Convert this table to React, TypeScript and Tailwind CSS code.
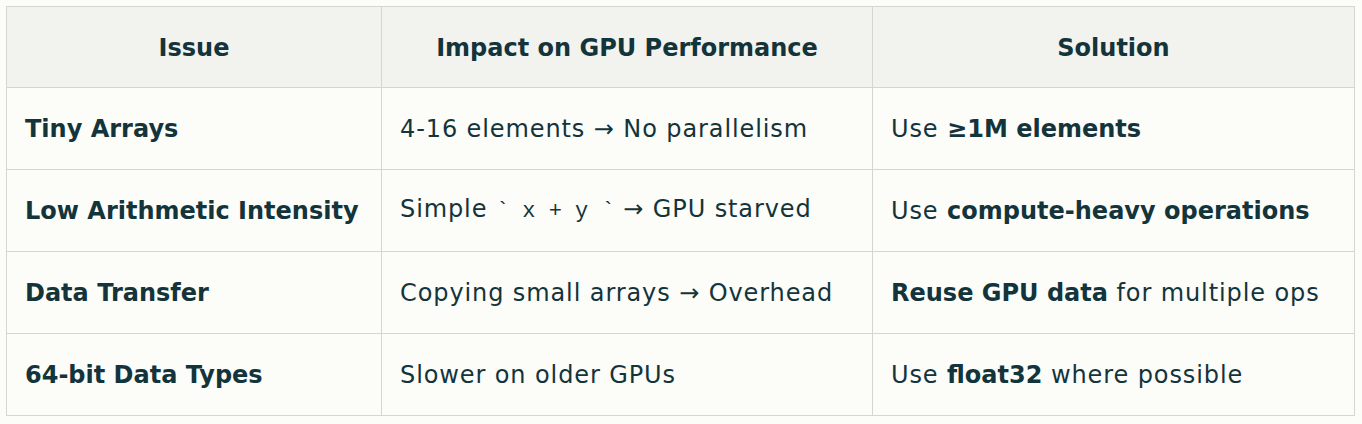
import React from 'react';

const B = ({ children }: { children: React.ReactNode }) => (
  <b className="font-semibold tracking-normal">{children}</b>
);

const rows = [
  {
    issue: 'Tiny Arrays',
    impact: <>4-16 elements → No parallelism</>,
    solution: (
      <>
        Use <B>≥1M elements</B>
      </>
    ),
  },
  {
    issue: 'Low Arithmetic Intensity',
    impact: (
      <>
        Simple{' '}
        <span className="font-['Liberation_Mono',monospace] text-[22px] tracking-normal whitespace-pre">` x + y `</span> → GPU starved
      </>
    ),
    solution: (
      <>
        Use <B>compute-heavy operations</B>
      </>
    ),
  },
  {
    issue: 'Data Transfer',
    impact: <>Copying small arrays → Overhead</>,
    solution: (
      <>
        <B>Reuse GPU data</B> for multiple ops
      </>
    ),
  },
  {
    issue: '64-bit Data Types',
    impact: <>Slower on older GPUs</>,
    solution: (
      <>
        Use <B>float32</B> where possible
      </>
    ),
  },
];

export default function App() {
  return (
    <div className="min-h-[424px] bg-[#fcfcf9] pt-[6px] pl-[6px] font-['DejaVu_Sans',sans-serif] text-[#13343b]">
      <table className="w-[1349px] table-fixed border-collapse border border-[#d5d5d1] text-[24px] leading-[32px]">
        <colgroup>
          <col className="w-[375px]" />
          <col className="w-[491px]" />
          <col />
        </colgroup>
        <thead>
          <tr className="h-[81px] bg-[#f2f2ee]">
            <th className="border border-[#d5d5d1] px-[18px] pt-[2px] text-center font-semibold">Issue</th>
            <th className="border border-[#d5d5d1] px-[18px] pt-[2px] text-center font-semibold">Impact on GPU Performance</th>
            <th className="border border-[#d5d5d1] px-[18px] pt-[2px] text-center font-semibold">Solution</th>
          </tr>
        </thead>
        <tbody>
          {rows.map((r) => (
            <tr key={r.issue} className="h-[82px]">
              <td className="border border-[#d5d5d1] px-[18px] font-semibold">{r.issue}</td>
              <td className="border border-[#d5d5d1] px-[18px] tracking-[0.9px]">{r.impact}</td>
              <td className="border border-[#d5d5d1] px-[18px] tracking-[0.9px]">{r.solution}</td>
            </tr>
          ))}
        </tbody>
      </table>
    </div>
  );
}
